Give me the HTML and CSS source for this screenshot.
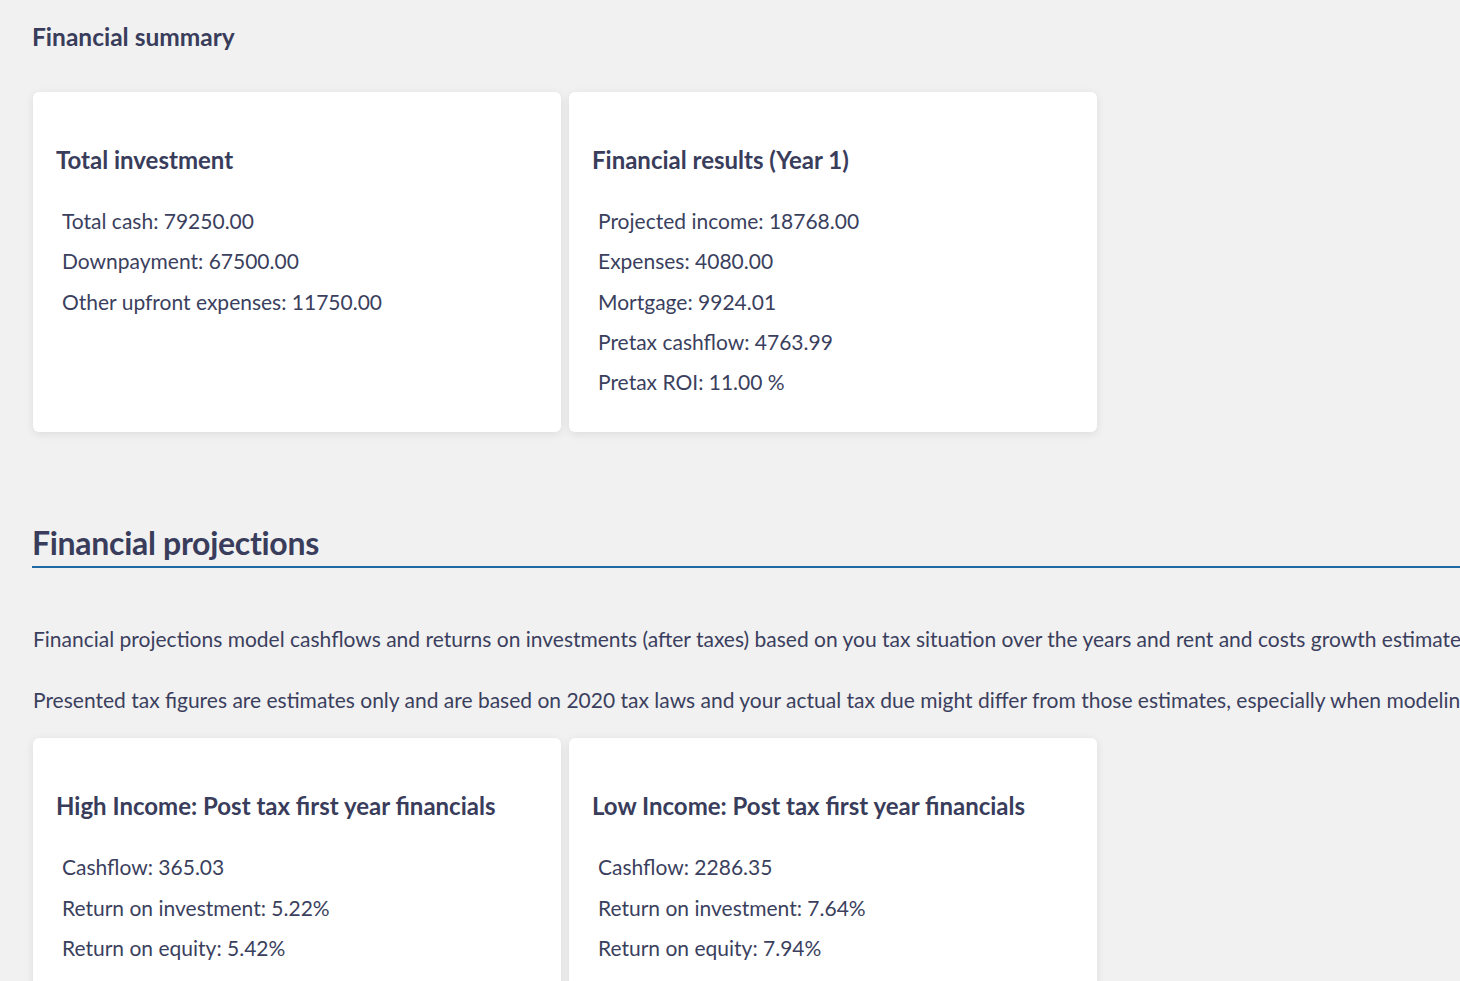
FILE: index.html
```html
<!DOCTYPE html>
<html lang="en">
<head>
<meta charset="utf-8">
<title>Financial summary</title>
<link rel="stylesheet" href="styles.css">
</head>
<body>
<main class="page">
  <section class="summary">
    <h2 class="summary-title">Financial summary</h2>
    <div class="card-row">
      <div class="card">
        <h3 class="card-title">Total investment</h3>
        <ul class="card-list">
          <li>Total cash: 79250.00</li>
          <li>Downpayment: 67500.00</li>
          <li>Other upfront expenses: 11750.00</li>
        </ul>
      </div>
      <div class="card">
        <h3 class="card-title">Financial results (Year 1)</h3>
        <ul class="card-list">
          <li>Projected income: 18768.00</li>
          <li>Expenses: 4080.00</li>
          <li>Mortgage: 9924.01</li>
          <li>Pretax cashflow: 4763.99</li>
          <li>Pretax ROI: 11.00 %</li>
        </ul>
      </div>
    </div>
  </section>

  <section class="projections">
    <h2 class="section-title">Financial projections</h2>
    <p class="note">Financial projections model cashflows and returns on investments (after taxes) based on you tax situation over the years and rent and costs growth estimates.</p>
    <p class="note">Presented tax figures are estimates only and are based on 2020 tax laws and your actual tax due might differ from those estimates, especially when modeling future years.</p>
    <div class="card-row">
      <div class="card">
        <h3 class="card-title">High Income: Post tax first year financials</h3>
        <ul class="card-list">
          <li>Cashflow: 365.03</li>
          <li>Return on investment: 5.22%</li>
          <li>Return on equity: 5.42%</li>
        </ul>
      </div>
      <div class="card">
        <h3 class="card-title">Low Income: Post tax first year financials</h3>
        <ul class="card-list">
          <li>Cashflow: 2286.35</li>
          <li>Return on investment: 7.64%</li>
          <li>Return on equity: 7.94%</li>
        </ul>
      </div>
    </div>
  </section>
</main>
</body>
</html>
```

FILE: styles.css
```css
html, body {
  margin: 0;
  padding: 0;
  background: #f1f1f1;
  overflow-x: hidden;
}

body {
  font-family: Lato, "Open Sans", sans-serif;
  color: #3b3f5e;
}

.page {
  padding: 22px 0 40px 32px;
  width: 1800px;
}

.summary-title {
  margin: 0 0 41px 0;
  font-size: 24.5px;
  font-weight: 700;
  color: #393d5b;
  line-height: 29px;
}

.card-row {
  display: flex;
  gap: 8px;
  margin-left: 1px;
}

.card {
  width: 528px;
  box-sizing: border-box;
  background: #ffffff;
  border-radius: 6px;
  box-shadow: 0 2px 10px rgba(0, 0, 0, 0.09);
  padding: 53px 23px 30px 23px;
}

.card-title {
  margin: 0 0 27px 0;
  font-size: 24px;
  line-height: 29px;
  font-weight: 700;
  color: #393d5b;
}

.card-list {
  list-style: none;
  margin: 0;
  padding: 0 0 0 6px;
}

.card-list li {
  font-size: 21px;
  line-height: 40.25px;
  color: #3b3f5e;
}

.projections {
  margin-top: 91px;
}

.section-title {
  margin: 0;
  font-size: 32px;
  line-height: 40px;
  font-weight: 700;
  color: #393d5b;
  letter-spacing: -0.3px;
  padding-bottom: 3px;
  border-bottom: 2px solid #1f6aa5;
}

.note {
  margin: 0;
  font-size: 21px;
  line-height: 24px;
  white-space: nowrap;
  margin-left: 1px;
}

.section-title + .note {
  margin-top: 59px;
}

.note + .note {
  margin-top: 37px;
}

.projections .card-row {
  margin-top: 26px;
}
```
